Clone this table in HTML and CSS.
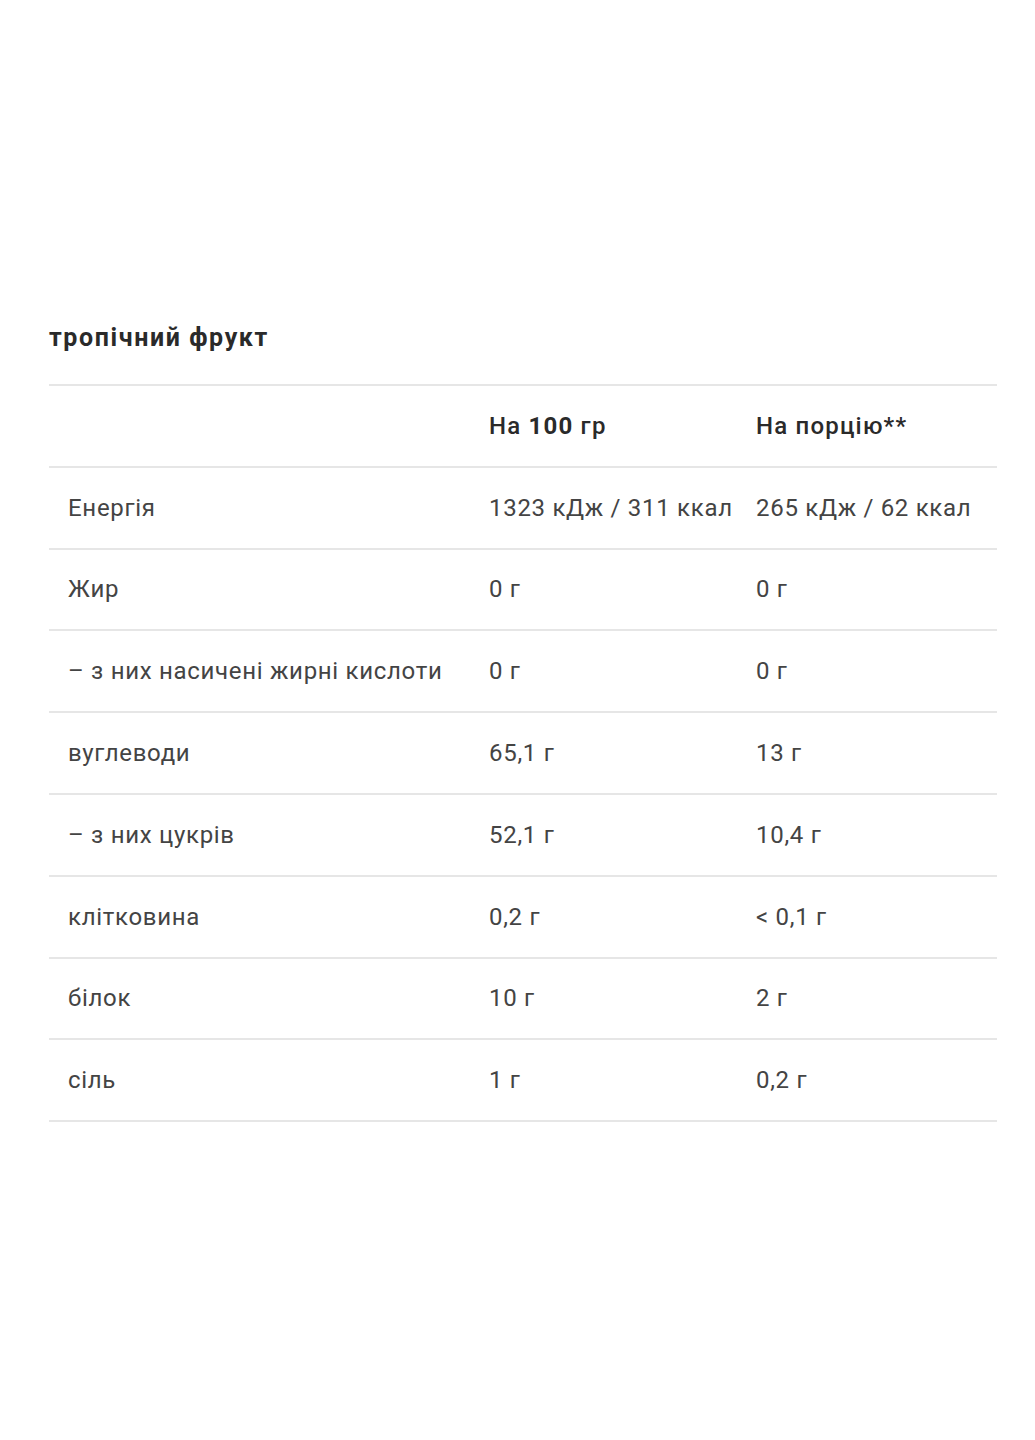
FILE: index.html
```html
<!DOCTYPE html>
<html lang="uk">
<head>
<meta charset="utf-8">
<title>Поживна цінність</title>
<link rel="stylesheet" href="styles.css">
</head>
<body>
<section class="nutrition">
  <h2 class="title">тропічний фрукт</h2>
  <div class="table">
    <div class="row head">
      <div class="cell label"></div>
      <div class="cell">На <b>100</b> гр</div>
      <div class="cell">На порцію**</div>
    </div>
    <div class="row">
      <div class="cell label">Енергія</div>
      <div class="cell">1323 кДж / 311 ккал</div>
      <div class="cell">265 кДж / 62 ккал</div>
    </div>
    <div class="row">
      <div class="cell label">Жир</div>
      <div class="cell">0 г</div>
      <div class="cell">0 г</div>
    </div>
    <div class="row">
      <div class="cell label">– з них насичені жирні кислоти</div>
      <div class="cell">0 г</div>
      <div class="cell">0 г</div>
    </div>
    <div class="row">
      <div class="cell label">вуглеводи</div>
      <div class="cell">65,1 г</div>
      <div class="cell">13 г</div>
    </div>
    <div class="row">
      <div class="cell label">– з них цукрів</div>
      <div class="cell">52,1 г</div>
      <div class="cell">10,4 г</div>
    </div>
    <div class="row">
      <div class="cell label">клітковина</div>
      <div class="cell">0,2 г</div>
      <div class="cell">&lt; 0,1 г</div>
    </div>
    <div class="row">
      <div class="cell label">білок</div>
      <div class="cell">10 г</div>
      <div class="cell">2 г</div>
    </div>
    <div class="row">
      <div class="cell label">сіль</div>
      <div class="cell">1 г</div>
      <div class="cell">0,2 г</div>
    </div>
  </div>
</section>
</body>
</html>
```
FILE: styles.css
```css
html, body {
  margin: 0;
  padding: 0;
  background: #ffffff;
}
body {
  font-family: Roboto, "Noto Sans", "Liberation Sans", sans-serif;
  color: #444444;
}
.nutrition {
  padding: 320px 38px 0 49px;
}
.title {
  margin: 0;
  font-size: 25px;
  line-height: 36px;
  font-weight: 700;
  letter-spacing: 1.6px;
  color: #2a2a2a;
  padding-bottom: 28px;
  border-bottom: 2px solid #e6e6e6;
}
.row {
  display: grid;
  grid-template-columns: 440px 267px 1fr;
  align-items: center;
  height: 79.8px;
  border-bottom: 2px solid #e6e6e6;
  font-size: 24px;
  letter-spacing: 0.7px;
}
.cell.label {
  padding-left: 19px;
}
.head {
  font-weight: 500;
  color: #2a2a2a;
  letter-spacing: 1.2px;
}
.head b {
  font-weight: 700;
}
```
